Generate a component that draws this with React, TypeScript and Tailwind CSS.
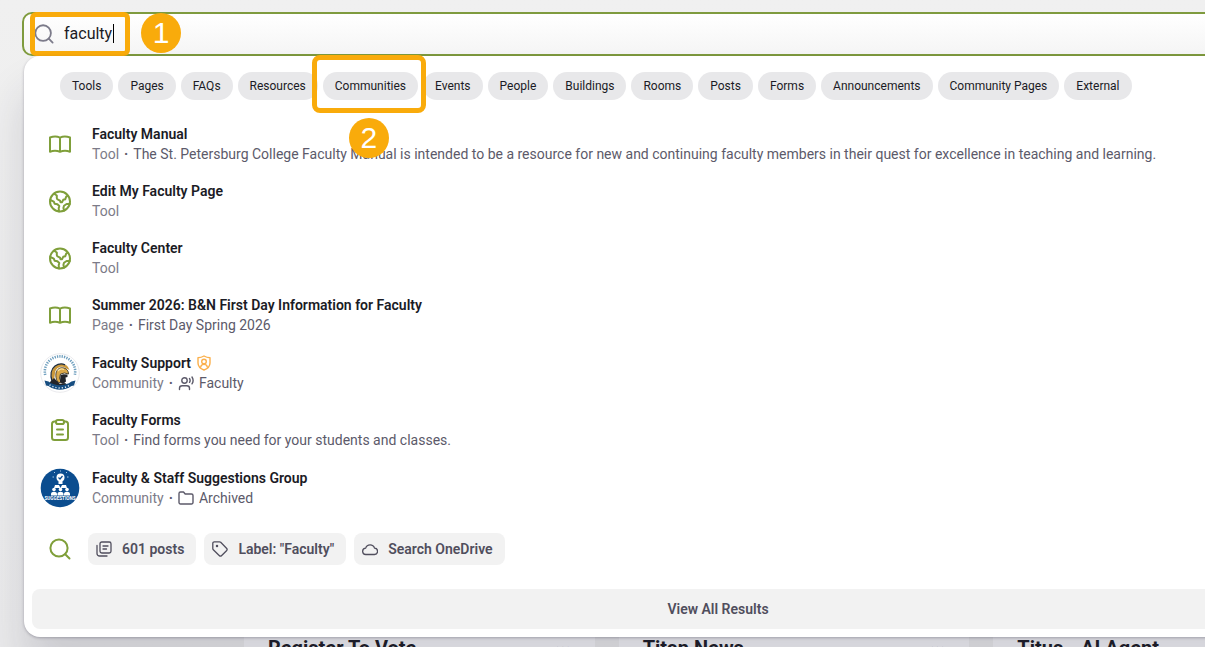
import React from "react";

const filters = [
  "Tools", "Pages", "FAQs", "Resources", "Communities", "Events", "People", "Buildings",
  "Rooms", "Posts", "Forms", "Announcements", "Community Pages", "External",
];

const stroke = {
  fill: "none",
  stroke: "currentColor",
  strokeLinecap: "round" as const,
  strokeLinejoin: "round" as const,
  "aria-hidden": true,
};

function SearchIcon({ className }: { className: string }) {
  return (
    <svg viewBox="0 0 22 22" className={className} {...stroke} strokeWidth="2">
      <circle cx="10" cy="10" r="8.600" />
      <path d="M16.200 16.200l4.300 4.300" />
    </svg>
  );
}

function BookIcon() {
  return (
    <svg viewBox="0 0 24 24" className="size-6" {...stroke} strokeWidth="2">
      <path d="M12 5.700C9.500 4.500 5 4.500 2 5.500v14.200c3-1.100 7-1.100 10 0 3-1.100 7-1.100 10 0V5.500c-3-1-7.500-1-10 .2zM12 5.700V19.500" />
    </svg>
  );
}

function GlobeIcon() {
  return (
    <svg viewBox="0 0 24 24" className="size-6" {...stroke} strokeWidth="2">
      <circle cx="12" cy="12.500" r="10" />
      <path d="M6.200 4.700L8.800 6.500V9c0 .8.5 1.300 1.200 1.600l2 1 .5 1.600h1.600l1.100-2.400 2-.5 1-2.600 1.500-1" />
      <path d="M2.200 11l3.600 1.600.8 2.100 2.800.6 1.900 1.800-.6 2.200.3 3.200" />
      <path d="M21.800 15h-3.200l-2.600 1.800-.6 2.200.8 2.600" />
    </svg>
  );
}

function ClipboardIcon() {
  return (
    <svg viewBox="0 0 24 24" className="size-6" {...stroke} strokeWidth="2">
      <path d="M8 3.500H6.500A2.500 2.500 0 0 0 4 6v13.500A2.500 2.500 0 0 0 6.500 22h11a2.500 2.500 0 0 0 2.500-2.500V6a2.500 2.500 0 0 0-2.500-2.500H16" />
      <rect x="8" y="2" width="8" height="4" rx="1.800" />
      <path d="M9 11.500h6M9 16.500h6" />
    </svg>
  );
}

function ShieldIcon() {
  return (
    <svg viewBox="0 0 14 16" className="ml-1.5 h-4 w-3.5 text-[#fbb04c]" {...stroke} strokeWidth="1.400">
      <path d="M7 1c2 1.200 4 1.700 6 1.700V8c0 3.500-2.500 5.700-6 7-3.500-1.300-6-3.500-6-7V2.700C3 2.700 5 2.200 7 1z" />
      <circle cx="7" cy="6.500" r="2.300" />
      <path d="M3.700 12c.3-1.700 1.500-2.600 3.300-2.600s3 .9 3.300 2.600" />
    </svg>
  );
}

function SpeakerIcon() {
  return (
    <svg viewBox="0 0 16 16" className="size-4" {...stroke} strokeWidth="1.400">
      <circle cx="6.500" cy="5.500" r="2.700" />
      <path d="M1.500 14.500v-1.200c0-1.600 1.200-2.600 2.700-2.600h4.600c1.500 0 2.700 1 2.700 2.600v1.200M11.500 3.500c.8 1.200.8 2.600 0 3.800M14 2c1.400 2.200 1.400 4.700 0 6.800" />
    </svg>
  );
}

function FolderIcon() {
  return (
    <svg viewBox="0 0 16 16" className="size-4" {...stroke} strokeWidth="1.400">
      <path d="M1 12.500v-9A1.500 1.500 0 0 1 2.500 2h3L7.200 4h6.300A1.500 1.500 0 0 1 15 5.500v7a1.500 1.500 0 0 1-1.500 1.500h-11A1.500 1.500 0 0 1 1 12.500z" />
    </svg>
  );
}

function PostsIcon() {
  return (
    <svg viewBox="0 0 16 16" className="size-4" {...stroke} strokeWidth="1.300">
      <rect x="4" y="1" width="11" height="11" rx="1.800" />
      <path d="M7 5h5M7 8h3.500M1 4.500v8A2.500 2.500 0 0 0 3.500 15h7.500" />
    </svg>
  );
}

function TagIcon() {
  return (
    <svg viewBox="0 0 16 16" className="size-4" {...stroke} strokeWidth="1.300">
      <path d="M.8 2.300A1.500 1.500 0 0 1 2.300.8h5.200c.5 0 .9.200 1.200.500l5.800 5.900c.8.800.8 1.700 0 2.500l-4.800 4.800c-.8.800-1.700.8-2.500 0L1.300 8.700a1.700 1.700 0 0 1-.5-1.200z" />
      <circle cx="5" cy="5" r=".6" fill="currentColor" />
    </svg>
  );
}

function CloudIcon() {
  return (
    <svg viewBox="0 0 16 16" className="size-4" {...stroke} strokeWidth="1.300">
      <path d="M4 13.500a3.200 3.200 0 0 1-.3-6.400 4.600 4.600 0 0 1 8.800 0 3.200 3.200 0 0 1-.3 6.400z" />
    </svg>
  );
}

function TitansLogo() {
  return (
    <svg viewBox="0 0 40 40" className="size-10" aria-hidden="true">
      <circle cx="20" cy="20" r="19.300" fill="#fff" stroke="#e4e5e8" strokeWidth=".8" />
      <path d="M5.200 22A15.200 15.200 0 1 1 34.800 22" fill="none" stroke="#6f9fbe" strokeWidth="2.600" strokeDasharray="1.300 1.100" />
      <path d="M12 28c-2-6-1-12 3-15 4-3 10-3 13 1l1.500 3-3-1.500C22 12 16 14 15 20l-1 8z" fill="#c9973b" />
      <path d="M12 28c-2-6-1-12 3-15 3-2 7-2.500 10-1.200" fill="none" stroke="#1c2d44" strokeWidth="1.300" />
      <path d="M16 20c1-4 4-6 8-5 3 .8 4.500 3 4.500 6l-4-1-4 1-1 4 2 5-4-1c-1.500-3-2-6-1.500-9z" fill="#dba94a" stroke="#2a2820" strokeWidth=".8" />
      <path d="M18 18c1.500-2 4-2.500 6-1.500" fill="none" stroke="#fbe3a0" strokeWidth="1.300" />
      <path d="M20.500 22l3-.8 4 .3v2.500l-2 .5.500 4-3 2.500-3-2z" fill="#22252b" />
      <path d="M10 29l4-4 3 3 3 3 5-1 3 2-8 2-10-3z" fill="#24262a" />
      <path d="M4.500 27.500l4 1c7 5 16 5 23 0l4-1-1.500 5-2.500.5c-7 5-16 5-23 0L6 32.500z" fill="#164d80" />
      <path d="M9.500 31.800c6.500 4.200 14.500 4.200 21 0" fill="none" stroke="#dceaf5" strokeWidth="1.500" strokeDasharray="1.200 2" />
    </svg>
  );
}

function SuggestionsLogo() {
  return (
    <svg viewBox="0 0 40 40" className="size-10" aria-hidden="true">
      <circle cx="20" cy="20" r="19.300" fill="#0b4d8f" />
      <g fill="#fff">
        <circle cx="20.500" cy="9.500" r="4" />
        <path d="M18.500 13h4v3h-4zM15 17h4l1.500 3 1.500-3h4l1 3H14z" />
        <circle cx="14" cy="21.500" r="1.800" />
        <circle cx="20.500" cy="21.500" r="1.800" />
        <circle cx="27" cy="21.500" r="1.800" />
        <path d="M11 27.500v-1.500c0-3 6-3 6 0v1.500zM17.500 27.500v-1.500c0-3 6-3 6 0v1.500zM24 27.500v-1.500c0-3 6-3 6 0v1.500z" />
      </g>
      <path d="M18.500 9.500l1.500 1.500 2.500-3" fill="none" stroke="#0b4d8f" strokeWidth="1.200" />
      <path d="M14 9h-1.500M27 9h1.500M15 5l-1-1M26 5l1-1M20.500 3.500V2.500" stroke="#a9c8e5" strokeWidth="1" />
      <text x="20" y="32.400" textAnchor="middle" fontSize="4.600" fontWeight="700" fill="#fff" fontFamily="Roboto, sans-serif">SUGGESTIONS</text>
    </svg>
  );
}

type Result = {
  title: string;
  kind: string;
  detail?: string;
  icon: React.ReactNode;
  detailIcon?: React.ReactNode;
  badge?: React.ReactNode;
};

const results: Result[] = [
  {
    title: "Faculty Manual",
    kind: "Tool",
    detail: "The St. Petersburg College Faculty Manual is intended to be a resource for new and continuing faculty members in their quest for excellence in teaching and learning.",
    icon: <BookIcon />,
  },
  { title: "Edit My Faculty Page", kind: "Tool", icon: <GlobeIcon /> },
  { title: "Faculty Center", kind: "Tool", icon: <GlobeIcon /> },
  { title: "Summer 2026: B&N First Day Information for Faculty", kind: "Page", detail: "First Day Spring 2026", icon: <BookIcon /> },
  { title: "Faculty Support", kind: "Community", detail: "Faculty", icon: <TitansLogo />, detailIcon: <SpeakerIcon />, badge: <ShieldIcon /> },
  { title: "Faculty Forms", kind: "Tool", detail: "Find forms you need for your students and classes.", icon: <ClipboardIcon /> },
  { title: "Faculty & Staff Suggestions Group", kind: "Community", detail: "Archived", icon: <SuggestionsLogo />, detailIcon: <FolderIcon /> },
];

const actions = [
  { label: "601 posts", icon: <PostsIcon /> },
  { label: 'Label: "Faculty"', icon: <TagIcon /> },
  { label: "Search OneDrive", icon: <CloudIcon /> },
];

const cards = ["Register To Vote", "Titan News", "Titus - AI Agent"];

function Step({ n, className }: { n: number; className: string }) {
  return (
    <span className={`absolute z-30 flex size-10 items-center justify-center rounded-full bg-[#f9ab0b] font-['Liberation_Sans',sans-serif] text-[30px] leading-10 text-white ${className}`}>
      {n}
    </span>
  );
}

export default function App() {
  return (
    <div className="relative h-screen overflow-hidden bg-linear-to-b from-[#f0f0f0] to-[#ebebec] font-[Roboto,sans-serif] text-sm text-[#1b1b25]">
      <header className="relative z-10 -mr-[209px] pt-3 pl-[22px]">
        <div className="relative flex h-11 items-center rounded-[10px] border-2 border-[#7f9b3e] bg-linear-to-b from-white to-[#f5f5f5] pl-2.5">
          <SearchIcon className="size-5 text-[#7c7b8a]" />
          <input
            aria-label="Search"
            defaultValue="faculty"
            className="ml-2.5 h-8 flex-1 bg-transparent pb-0.5 text-base outline-none"
          />
          <span className="absolute top-2.5 left-[89px] h-[19px] w-px bg-black" />
          <span className="absolute -top-0.5 left-1.5 h-11 w-[100px] rounded-md border-[5px] border-[#f9ab0b]" />
          <Step n={1} className="-top-px left-[117px]" />
        </div>

        <section
          aria-label="Search results"
          className="absolute top-14 right-0.5 left-6 z-20 rounded-2xl bg-white p-2 pt-4 shadow-[0_36px_44px_rgba(40,35,60,0.16),0_1px_3px_rgba(40,35,60,0.3)]"
        >
          <div className="flex gap-[5px] pl-7">
            {filters.map((label) => (
              <div key={label} className="relative shrink-0">
                <button className="h-7 rounded-full bg-[#e8e8ea] px-3 text-xs whitespace-nowrap">{label}</button>
                {label === "Communities" && (
                  <>
                    <span className="absolute -top-[17px] -right-2 -bottom-[13px] -left-[11px] z-20 rounded-lg border-[5px] border-[#f9ab0b]" />
                    <Step n={2} className="top-[46px] left-[26px]" />
                  </>
                )}
              </div>
            ))}
          </div>

          <ul className="mt-4">
            {results.map((r) => (
              <li key={r.title}>
                <a href="#" className={`flex items-center gap-3 pb-[9px] pl-2 ${r.detailIcon ? "pt-[9px]" : "pt-2"}`}>
                  <span className="flex w-10 shrink-0 justify-center text-[#7f9f3a]">{r.icon}</span>
                  <span className="block leading-5">
                    <span className="flex items-center font-semibold whitespace-nowrap">
                      {r.title}
                      {r.badge}
                    </span>
                    <span className="flex items-center gap-[5px] whitespace-nowrap text-[#5c5a6a]">
                      <span className="text-[#7c7b88]">{r.kind}</span>
                      {r.detail && <span className="font-bold">·</span>}
                      {r.detailIcon}
                      {r.detail && <span>{r.detail}</span>}
                    </span>
                  </span>
                </a>
              </li>
            ))}
          </ul>

          <div className="mt-4 flex items-center gap-2 pl-2">
            <span className="flex w-10 justify-center text-[#7f9f3a]">
              <SearchIcon className="size-[22px]" />
            </span>
            {actions.map((a) => (
              <button key={a.label} className="flex h-8 items-center gap-2.5 rounded-lg bg-[#f2f2f2] pr-3 pl-2 font-semibold text-[#504e5d]">
                {a.icon}
                {a.label}
              </button>
            ))}
          </div>

          <button className="mt-6 h-10 w-full rounded-lg bg-[#f2f2f2] font-semibold text-[#504e5d]">View All Results</button>
        </section>
      </header>

      <main className="-mr-[139px] grid grid-cols-3 gap-6 pt-[554px] pl-[244px]">
        {cards.map((title) => (
          <article key={title} className="flex h-48 items-start justify-between bg-[#f5f5f7] px-6 pt-6">
            <h2 className="text-xl leading-7 font-bold">{title}</h2>
            <button aria-label={`${title} options`} className="text-xl leading-7 text-[#7c7b88]">···</button>
          </article>
        ))}
      </main>
    </div>
  );
}
